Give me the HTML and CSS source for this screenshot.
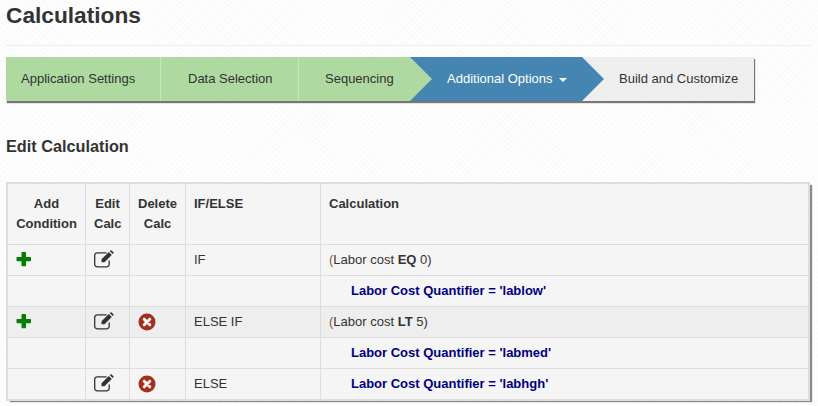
FILE: index.html
```html
<!DOCTYPE html>
<html lang="en">
<head>
<meta charset="utf-8">
<title>Calculations</title>
<link rel="stylesheet" href="styles.css">
</head>
<body>
<svg class="defs" width="0" height="0" aria-hidden="true">
  <symbol id="plus" viewBox="0 0 16 16"><path d="M6.200 1h3.100a.7.7 0 0 1 .7.7v4.300h4.300a.7.7 0 0 1 .7.7v2.800a.7.7 0 0 1-.7.7h-4.300v4.300a.7.7 0 0 1-.7.7H6.200a.7.7 0 0 1-.7-.7v-4.300H1.200a.7.7 0 0 1-.7-.7V6.700a.7.7 0 0 1 .7-.7h4.300V1.700A.7.7 0 0 1 6.200 1z" fill="#077d07"/></symbol>
  <symbol id="edit" viewBox="0 0 20 18"><path d="M15.200 10.500v3.700a2.600 2.600 0 0 1-2.600 2.600H3.300a2.600 2.600 0 0 1-2.600-2.600V5.400a2.600 2.600 0 0 1 2.600-2.600h9.300" fill="none" stroke="#333" stroke-width="1.300"/><path d="M7.500 9.300 14.800 2l3 3-7.300 7.300h-3z M15.700 1.100l.8-.7a.8.8 0 0 1 1.100 0l1.800 1.800a.8.8 0 0 1 0 1.100l-.8.8z" fill="#333"/></symbol>
  <symbol id="del" viewBox="0 0 18 18"><circle cx="9" cy="9" r="8.500" fill="#a52f1f"/><path d="M6.200 6.200l5.600 5.600M11.800 6.200l-5.600 5.600" fill="none" stroke="#f5f5f5" stroke-width="3" stroke-linecap="round"/></symbol>
</svg>
<main class="page">
  <h1 class="title">Calculations</h1>
  <hr class="rule">
  <nav class="steps">
    <a class="step done s1">Application Settings</a>
    <a class="step done s2">Data Selection</a>
    <a class="step done s3 arrow-green">Sequencing</a>
    <a class="step current s4">Additional Options<span class="caret"></span></a>
    <a class="step todo s5">Build and Customize</a>
  </nav>
  <h2 class="subtitle">Edit Calculation</h2>
  <table class="calc">
    <thead>
      <tr>
        <th class="c-add">Add Condition</th>
        <th class="c-edit">Edit Calc</th>
        <th class="c-del">Delete Calc</th>
        <th class="c-type left">IF/ELSE</th>
        <th class="left">Calculation</th>
      </tr>
    </thead>
    <tbody>
      <tr>
        <td><svg class="i-plus"><use href="#plus"/></svg></td>
        <td><svg class="i-edit"><use href="#edit"/></svg></td>
        <td></td>
        <td>IF</td>
        <td><span class="paren">(</span>Labor cost <b class="op">EQ</b> 0)</td>
      </tr>
      <tr>
        <td></td><td></td><td></td><td></td>
        <td><span class="assign">Labor Cost Quantifier = 'lablow'</span></td>
      </tr>
      <tr class="shade">
        <td><svg class="i-plus"><use href="#plus"/></svg></td>
        <td><svg class="i-edit"><use href="#edit"/></svg></td>
        <td><svg class="i-del"><use href="#del"/></svg></td>
        <td>ELSE IF</td>
        <td><span class="paren">(</span>Labor cost <b class="op">LT</b> 5)</td>
      </tr>
      <tr>
        <td></td><td></td><td></td><td></td>
        <td><span class="assign">Labor Cost Quantifier = 'labmed'</span></td>
      </tr>
      <tr>
        <td></td>
        <td><svg class="i-edit"><use href="#edit"/></svg></td>
        <td><svg class="i-del"><use href="#del"/></svg></td>
        <td>ELSE</td>
        <td><span class="assign">Labor Cost Quantifier = 'labhgh'</span></td>
      </tr>
    </tbody>
  </table>
</main>
</body>
</html>
```

FILE: styles.css
```css
* { box-sizing: border-box; }
html, body { margin: 0; padding: 0; min-height: 406px; }
body {
  background-color: #fefefe;
  background-image:
    repeating-linear-gradient(45deg, rgba(0,0,0,.012) 0 1px, transparent 1px 4px),
    repeating-linear-gradient(-45deg, rgba(0,0,0,.012) 0 1px, transparent 1px 4px);
  color: #333;
  font-family: "Liberation Sans", Arial, sans-serif;
  font-size: 13px;
  line-height: 20px;
  overflow: hidden;
}
.defs { position: absolute; }
.page { padding: 0 6px; }
.title {
  margin: 0;
  padding-top: 3px;
  font-size: 22.7px;
  line-height: 24px;
  font-weight: 700;
}
.rule {
  margin: 18px 0 11px;
  border: 0;
  border-top: 1px solid #eee;
}
.steps {
  display: flex;
  width: 748px;
  height: 44px;
  box-shadow: 1px 2px 1px #777;
}
.step {
  position: relative;
  display: block;
  height: 44px;
  line-height: 43px;
  white-space: nowrap;
  color: #333;
}
.done { background: #aed9a0; border-right: 1px solid #c9e6c0; }
.s1 { width: 155px; padding-left: 15px; }
.s2 { width: 138px; padding-left: 27px; }
.s3 { width: 111px; padding-left: 26px; border-right: 0; }
.s4 { width: 172px; padding-left: 37px; background: #4585b1; color: #fff; }
.s5 { width: 172px; padding-left: 37px; background: #eee; }
.arrow-green::after,
.s4::after {
  content: "";
  position: absolute;
  top: 0;
  left: 100%;
  z-index: 1;
  width: 22px;
  height: 44px;
  clip-path: polygon(0 0, 100% 50%, 0 100%);
}
.arrow-green::after { background: #aed9a0; }
.s4::after { background: #4585b1; }
.caret {
  display: inline-block;
  margin-left: 6px;
  vertical-align: middle;
  border-top: 4px solid #fff;
  border-left: 4px solid transparent;
  border-right: 4px solid transparent;
}
.subtitle {
  margin: 36px 0 28px;
  font-size: 16.25px;
  line-height: 18px;
  font-weight: 700;
}
.calc {
  width: 802px;
  margin-left: 1px;
  border-collapse: collapse;
  table-layout: fixed;
  background: #f5f5f5;
  outline: 2px solid #ddd;
  outline-offset: -1px;
  box-shadow: 3px 2px 1px #8a8a8a;
}
.calc th, .calc td {
  border: 1px solid #ddd;
  padding: 5px 8px;
  vertical-align: top;
}
.calc th {
  padding: 10px 8px 10px;
  text-align: center;
  font-weight: 700;
  height: 61px;
}
.calc th.left { text-align: left; }
.calc td { height: 31px; }
.c-add { width: 78px; }
.c-edit { width: 44px; }
.c-del { width: 56px; }
.c-type { width: 135px; }
.shade td { background: #eee; }
.paren { color: #8a5a2b; }
.op { font-weight: 700; }
.assign { display: block; margin-left: 22px; font-weight: 700; color: #000080; }
svg { display: block; }
.i-plus { width: 16px; height: 16px; margin-top: 1px; }
.i-edit { width: 20px; height: 18px; }
.i-del { width: 18px; height: 18px; margin-top: 1px; }
```
